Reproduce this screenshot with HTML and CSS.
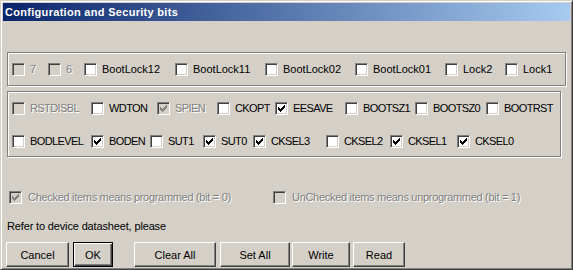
FILE: index.html
```html
<!DOCTYPE html>
<html>
<head>
<meta charset="utf-8">
<link rel="stylesheet" href="styles.css">
</head>
<body>
<div class="window">
  <div class="titlebar">Configuration and Security bits</div>
  <div class="content">
    <div class="group g1">
      <div class="row r1">
        <div class="item dis"><span class="cb"></span><span class="lbl">7</span></div>
        <div class="item dis"><span class="cb"></span><span class="lbl">6</span></div>
        <div class="item"><span class="cb"></span><span class="lbl">BootLock12</span></div>
        <div class="item"><span class="cb"></span><span class="lbl">BootLock11</span></div>
        <div class="item"><span class="cb"></span><span class="lbl">BootLock02</span></div>
        <div class="item"><span class="cb"></span><span class="lbl">BootLock01</span></div>
        <div class="item"><span class="cb"></span><span class="lbl">Lock2</span></div>
        <div class="item"><span class="cb"></span><span class="lbl">Lock1</span></div>
      </div>
    </div>
    <div class="group g2">
      <div class="row r2 caps">
        <div class="item dis"><span class="cb"></span><span class="lbl">RSTDISBL</span></div>
        <div class="item"><span class="cb"></span><span class="lbl">WDTON</span></div>
        <div class="item dis"><span class="cb"><svg class="chk" viewBox="0 0 7 7" width="7" height="7"><path d="M6 0h1v1h-1z M5 1h2v1h-2z M0 2h1v1h-1z M4 2h3v1h-3z M0 3h2v1h-2z M3 3h3v1h-3z M0 4h5v1h-5z M1 5h3v1h-3z M2 6h1v1h-1z"/></svg></span><span class="lbl">SPIEN</span></div>
        <div class="item"><span class="cb"></span><span class="lbl">CKOPT</span></div>
        <div class="item"><span class="cb"><svg class="chk" viewBox="0 0 7 7" width="7" height="7"><path d="M6 0h1v1h-1z M5 1h2v1h-2z M0 2h1v1h-1z M4 2h3v1h-3z M0 3h2v1h-2z M3 3h3v1h-3z M0 4h5v1h-5z M1 5h3v1h-3z M2 6h1v1h-1z"/></svg></span><span class="lbl">EESAVE</span></div>
        <div class="item"><span class="cb"></span><span class="lbl">BOOTSZ1</span></div>
        <div class="item"><span class="cb"></span><span class="lbl">BOOTSZ0</span></div>
        <div class="item"><span class="cb"></span><span class="lbl">BOOTRST</span></div>
      </div>
      <div class="row r3 caps">
        <div class="item"><span class="cb"></span><span class="lbl">BODLEVEL</span></div>
        <div class="item"><span class="cb"><svg class="chk" viewBox="0 0 7 7" width="7" height="7"><path d="M6 0h1v1h-1z M5 1h2v1h-2z M0 2h1v1h-1z M4 2h3v1h-3z M0 3h2v1h-2z M3 3h3v1h-3z M0 4h5v1h-5z M1 5h3v1h-3z M2 6h1v1h-1z"/></svg></span><span class="lbl">BODEN</span></div>
        <div class="item"><span class="cb"></span><span class="lbl">SUT1</span></div>
        <div class="item"><span class="cb"><svg class="chk" viewBox="0 0 7 7" width="7" height="7"><path d="M6 0h1v1h-1z M5 1h2v1h-2z M0 2h1v1h-1z M4 2h3v1h-3z M0 3h2v1h-2z M3 3h3v1h-3z M0 4h5v1h-5z M1 5h3v1h-3z M2 6h1v1h-1z"/></svg></span><span class="lbl">SUT0</span></div>
        <div class="item"><span class="cb"><svg class="chk" viewBox="0 0 7 7" width="7" height="7"><path d="M6 0h1v1h-1z M5 1h2v1h-2z M0 2h1v1h-1z M4 2h3v1h-3z M0 3h2v1h-2z M3 3h3v1h-3z M0 4h5v1h-5z M1 5h3v1h-3z M2 6h1v1h-1z"/></svg></span><span class="lbl">CKSEL3</span></div>
        <div class="item"><span class="cb"></span><span class="lbl">CKSEL2</span></div>
        <div class="item"><span class="cb"><svg class="chk" viewBox="0 0 7 7" width="7" height="7"><path d="M6 0h1v1h-1z M5 1h2v1h-2z M0 2h1v1h-1z M4 2h3v1h-3z M0 3h2v1h-2z M3 3h3v1h-3z M0 4h5v1h-5z M1 5h3v1h-3z M2 6h1v1h-1z"/></svg></span><span class="lbl">CKSEL1</span></div>
        <div class="item"><span class="cb"><svg class="chk" viewBox="0 0 7 7" width="7" height="7"><path d="M6 0h1v1h-1z M5 1h2v1h-2z M0 2h1v1h-1z M4 2h3v1h-3z M0 3h2v1h-2z M3 3h3v1h-3z M0 4h5v1h-5z M1 5h3v1h-3z M2 6h1v1h-1z"/></svg></span><span class="lbl">CKSEL0</span></div>
      </div>
    </div>
    <div class="row legend">
      <div class="item dis"><span class="cb"><svg class="chk" viewBox="0 0 7 7" width="7" height="7"><path d="M6 0h1v1h-1z M5 1h2v1h-2z M0 2h1v1h-1z M4 2h3v1h-3z M0 3h2v1h-2z M3 3h3v1h-3z M0 4h5v1h-5z M1 5h3v1h-3z M2 6h1v1h-1z"/></svg></span><span class="lbl">Checked items means programmed (bit = 0)</span></div>
      <div class="item dis"><span class="cb"></span><span class="lbl">UnChecked items means unprogrammed (bit = 1)</span></div>
    </div>
    <div class="note">Refer to device datasheet, please</div>
    <div class="buttons">
      <div class="btn b-cancel">Cancel</div>
      <div class="btn default b-ok">OK</div>
      <div class="btn b-clear">Clear All</div>
      <div class="btn b-set">Set All</div>
      <div class="btn b-write">Write</div>
      <div class="btn b-read">Read</div>
    </div>
  </div>
</div>
</body>
</html>
```

FILE: styles.css
```css
html, body {
  margin: 0;
  padding: 0;
  background: #d4d0c8;
}
.window {
  width: 573px;
  height: 270px;
  box-sizing: border-box;
  border: 1px solid;
  border-color: #d4d0c8 #404040 #404040 #d4d0c8;
  box-shadow: inset 1px 1px #fff, inset -1px -1px #808080;
  padding: 2px;
  background: #d4d0c8;
  font-family: "Liberation Sans", Arial, sans-serif;
  font-size: 11px;
  color: #000;
  display: flex;
  flex-direction: column;
}
.titlebar {
  height: 18px;
  line-height: 18px;
  padding-left: 2px;
  background: linear-gradient(to right, #0a246a, #a6caf0);
  color: #fff;
  font-weight: bold;
  letter-spacing: 0.3px;
  white-space: nowrap;
}
.content {
  padding: 0 4px;
  display: flex;
  flex-direction: column;
  align-items: flex-start;
}
.group {
  box-sizing: border-box;
  border: 1px solid #808080;
  box-shadow: inset 1px 1px #fff, 1px 1px #fff;
  padding: 10px 0 0 4px;
}
.g1 {
  margin-top: 31px;
  width: 559px;
  height: 34px;
}
.g2 {
  margin-top: 5px;
  width: 554px;
  height: 66px;
  display: flex;
  flex-direction: column;
  gap: 20px;
}
.row {
  display: grid;
  height: 13px;
  align-items: center;
}
.r1 { grid-template-columns: 36px 36px 91px 90px 90px 90px 60px auto; }
.r2 { grid-template-columns: 79px 66px 60px 58px 70px 70px 71px auto; }
.r3 { grid-template-columns: 79px 59px 53px 50px 73px 64px 67px auto; }
.caps .lbl { letter-spacing: -0.6px; }
.item {
  display: flex;
  align-items: center;
  gap: 5px;
  white-space: nowrap;
  height: 13px;
}
.lbl {
  line-height: 13px;
}
.cb {
  width: 13px;
  height: 13px;
  box-sizing: border-box;
  border: 1px solid;
  border-color: #808080 #fff #fff #808080;
  box-shadow: inset 1px 1px #404040, inset -1px -1px #d4d0c8;
  background: #fff;
  padding: 2px;
  flex: none;
  display: flex;
}
.chk {
  display: block;
  fill: #000;
  shape-rendering: crispEdges;
}
.dis .cb { background: #d4d0c8; }
.dis .chk { fill: #808080; }
.dis .lbl {
  color: #808080;
  text-shadow: 1px 1px #fff;
}
.legend {
  margin-top: 34px;
  margin-left: 2px;
  grid-template-columns: 264px auto;
}
.legend .item { gap: 6px; }
.legend .lbl { letter-spacing: -0.3px; }
.note {
  margin-top: 16px;
  height: 13px;
  line-height: 13px;
  letter-spacing: -0.15px;
}
.buttons {
  margin-top: 9px;
  margin-left: -1px;
  display: flex;
}
.btn {
  box-sizing: border-box;
  height: 25px;
  display: flex;
  align-items: center;
  justify-content: center;
  border: 1px solid;
  border-color: #fff #404040 #404040 #fff;
  box-shadow: inset -1px -1px #808080;
}
.btn.default {
  border-color: #000;
  box-shadow: inset 1px 1px #fff, inset -1px -1px #404040, inset -2px -2px #808080;
}
.b-cancel { width: 63px; }
.b-ok { width: 40px; margin-left: 4px; }
.b-clear { width: 82px; margin-left: 21px; }
.b-set { width: 70px; margin-left: 4px; }
.b-write { width: 58px; margin-left: 2px; }
.b-read { width: 52px; margin-left: 3px; }
```
